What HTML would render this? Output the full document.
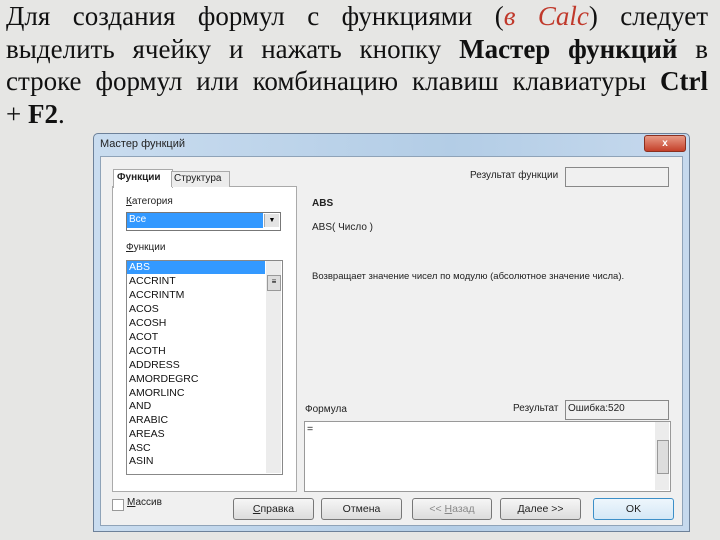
<!DOCTYPE html>
<html><head><meta charset="utf-8"><style>
body{margin:0;width:720px;height:540px;overflow:hidden;background:#e6e6e4;position:relative;font-family:"Liberation Sans",sans-serif}
.ln{position:absolute;left:6px;width:702px;font-family:"Liberation Serif",serif;font-size:27px;line-height:32px;color:#111;text-align:justify;text-align-last:justify;white-space:nowrap}
.ln.l{text-align-last:left}
.a{position:absolute}
.s{font-size:10.5px;color:#222;position:absolute;white-space:nowrap}
.btn{position:absolute;top:498px;height:20px;border:1px solid #777;border-radius:3px;background:linear-gradient(#f6f6f6,#dcdcdc);font-size:10.5px;text-align:center;line-height:20px;color:#222}
.li{position:absolute;left:129px;font-size:10.5px;color:#111}
</style></head><body>
<div class="ln" style="top:0px;white-space:normal">Для создания формул с функциями (<i style="color:#c0392b">в Calc</i>) следует</div>
<div class="ln" style="top:33px;white-space:normal">выделить ячейку и нажать кнопку <b>Мастер функций</b> в</div>
<div class="ln" style="top:65px;white-space:normal">строке формул или комбинацию клавиш клавиатуры <b>Ctrl</b></div>
<div class="ln l" style="top:98px">+ <b>F2</b>.</div>
<!-- window -->
<div class="a" style="left:93px;top:133px;width:595px;height:397px;background:linear-gradient(90deg,#c9dcef,#b3cde6 60%,#c6d9ed);border:1px solid #6d8199;border-radius:5px 5px 0 0"></div>
<div class="s" style="left:100px;top:138px;font-size:11px">Мастер функций</div>
<div class="a" style="left:644px;top:135px;width:40px;height:15px;background:linear-gradient(#e89a85,#c4402a);border:1px solid #8a3020;border-radius:3px;color:#fff;font-size:10px;text-align:center;line-height:15px;font-weight:bold">x</div>
<div class="a" style="left:100px;top:156px;width:581px;height:368px;background:#f0f0f0;border:1px solid #8fa3b8"></div>
<!-- tabs -->
<div class="a" style="left:112px;top:186px;width:183px;height:304px;background:#fff;border:1px solid #aaa"></div>
<div class="a" style="left:113px;top:169px;width:58px;height:18px;background:#fff;border:1px solid #aaa;border-bottom:none"></div>
<div class="s" style="left:117px;top:172px;font-weight:bold;font-size:10px">Функции</div>
<div class="a" style="left:171px;top:171px;width:57px;height:15px;background:#ececec;border:1px solid #aaa;border-bottom:none"></div>
<div class="s" style="left:174px;top:173px;font-size:10px">Структура</div>
<div class="s" style="left:126px;top:196px;font-size:10px"><u>К</u>атегория</div>
<div class="a" style="left:126px;top:212px;width:153px;height:17px;border:1px solid #777;background:#fff"></div>
<div class="a" style="left:127px;top:213px;width:136px;height:15px;background:#3399ff"></div>
<div class="s" style="left:129px;top:214px;font-size:10px;color:#fff">Все</div>
<div class="a" style="left:264px;top:214px;width:14px;height:13px;background:#e4e4e4;border-left:1px solid #aaa;font-size:7px;text-align:center;line-height:13px">▼</div>
<div class="s" style="left:126px;top:242px;font-size:10px"><u>Ф</u>ункции</div>
<div class="a" style="left:126px;top:260px;width:155px;height:213px;border:1px solid #888;background:#fff"></div>
<div class="a" style="left:266px;top:261px;width:15px;height:212px;background:#ececec"></div>
<div class="a" style="left:267px;top:275px;width:12px;height:14px;background:#ddd;border:1px solid #999;font-size:8px;line-height:12px;text-align:center">≡</div>
<div class="a" style="left:127px;top:261px;width:138px;height:13px;background:#3399ff"></div>
<div class="li" style="top:261px;color:#fff">ABS</div>
<div class="li" style="top:275px">ACCRINT</div>
<div class="li" style="top:289px">ACCRINTM</div>
<div class="li" style="top:303px">ACOS</div>
<div class="li" style="top:317px">ACOSH</div>
<div class="li" style="top:331px">ACOT</div>
<div class="li" style="top:345px">ACOTH</div>
<div class="li" style="top:359px">ADDRESS</div>
<div class="li" style="top:373px">AMORDEGRC</div>
<div class="li" style="top:387px">AMORLINC</div>
<div class="li" style="top:400px">AND</div>
<div class="li" style="top:414px">ARABIC</div>
<div class="li" style="top:428px">AREAS</div>
<div class="li" style="top:442px">ASC</div>
<div class="li" style="top:455px">ASIN</div>
<!-- right -->
<div class="s" style="left:470px;top:170px;font-size:10px">Результат функции</div>
<div class="a" style="left:565px;top:167px;width:102px;height:18px;border:1px solid #888;background:#f0f0f0"></div>
<div class="s" style="left:312px;top:198px;font-weight:bold;font-size:10px">ABS</div>
<div class="s" style="left:312px;top:222px;font-size:10px">ABS( Число )</div>
<div class="s" style="left:312px;top:271px;font-size:9.5px">Возвращает значение чисел по модулю (абсолютное значение числа).</div>
<div class="s" style="left:305px;top:404px;font-size:10px">Формула</div>
<div class="s" style="left:513px;top:403px;font-size:10px">Результат</div>
<div class="a" style="left:565px;top:400px;width:102px;height:18px;border:1px solid #888;background:#f0f0f0"></div>
<div class="s" style="left:568px;top:403px;font-size:10px">Ошибка:520</div>
<div class="a" style="left:304px;top:421px;width:365px;height:69px;border:1px solid #999;background:#fff"></div>
<div class="s" style="left:307px;top:423px">=</div>
<div class="a" style="left:655px;top:422px;width:14px;height:68px;background:#ececec"></div>
<div class="a" style="left:657px;top:440px;width:10px;height:32px;background:#ddd;border:1px solid #999"></div>
<div class="a" style="left:112px;top:499px;width:10px;height:10px;border:1px solid #999;background:#fff"></div>
<div class="s" style="left:127px;top:497px;font-size:10px"><u>М</u>ассив</div>
<div class="btn" style="left:233px;width:79px"><u>С</u>правка</div>
<div class="btn" style="left:321px;width:79px">Отмена</div>
<div class="btn" style="left:412px;width:78px;color:#888">&lt;&lt; <u>Н</u>азад</div>
<div class="btn" style="left:500px;width:79px"><u>Д</u>алее &gt;&gt;</div>
<div class="btn" style="left:593px;width:79px;border-color:#3c8fc8;background:linear-gradient(#eef6fc,#d4e8f6)">OK</div>
</body></html>
